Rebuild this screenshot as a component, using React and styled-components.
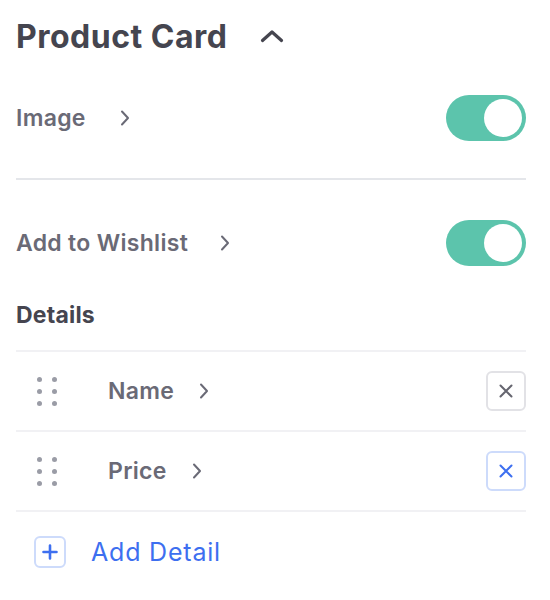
import styled, { createGlobalStyle } from 'styled-components';

const GlobalStyle = createGlobalStyle`
	body {
		margin: 0;
		background: #fff;
		font-family: Inter, 'Noto Sans', sans-serif;
	}
`;

const Panel = styled.section`
	width: 510px;
	padding: 0 24px 0 16px;
	display: flex;
	flex-direction: column;
`;

const Header = styled.header`
	height: 72px;
	display: flex;
	align-items: center;
	gap: 32px;
`;

const Title = styled.h2`
	margin: 0;
	font-size: 32px;
	font-weight: 700;
	letter-spacing: 0.5px;
	color: #45454f;
`;

const ToggleRow = styled.div`
	height: 46px;
	margin-top: ${(p) => p.$top}px;
	display: flex;
	align-items: center;
	justify-content: space-between;
`;

const LabelGroup = styled.div`
	display: flex;
	align-items: center;
	gap: ${(p) => p.$gap}px;
`;

const Label = styled.span`
	font-size: 23px;
	font-weight: 600;
	letter-spacing: 0.3px;
	color: #6a6a76;
`;

const Divider = styled.hr`
	margin: 37px 0 0;
	border: none;
	border-top: 2px solid #e4e6ea;
`;

const Toggle = styled.button`
	width: 80px;
	height: 46px;
	padding: 4px;
	border: none;
	border-radius: 23px;
	background: #5cc4ac;
	display: flex;
	justify-content: flex-end;
	align-items: center;
`;

const Knob = styled.span`
	width: 38px;
	height: 38px;
	border-radius: 50%;
	background: #fff;
`;

const SectionTitle = styled.h3`
	margin: 34px 0 0;
	height: 30px;
	line-height: 30px;
	font-size: 23px;
	font-weight: 700;
	letter-spacing: 0.2px;
	color: #45454f;
`;

const List = styled.div`
	margin-top: 20px;
	border-top: 2px solid #f1f1f4;
`;

const ItemRow = styled.div`
	height: 78px;
	border-bottom: 2px solid #f1f1f4;
	display: flex;
	align-items: center;
	padding-left: 21px;
`;

const Handle = styled.span`
	width: 56px;
	display: grid;
	grid-template-columns: repeat(2, 5px);
	gap: 7px 10px;
	& > i {
		width: 5px;
		height: 5px;
		border-radius: 50%;
		background: #9a9ca6;
	}
`;

const ItemName = styled(LabelGroup)`
	margin-left: 15px;
	flex: 1;
`;

const RemoveButton = styled.button`
	width: 40px;
	height: 40px;
	padding: 0;
	border-radius: 6px;
	border: 2px solid ${(p) => (p.$active ? '#cddbfb' : '#e2e2e6')};
	background: #fff;
	color: ${(p) => (p.$active ? '#3d6ff0' : '#65656f')};
	display: flex;
	align-items: center;
	justify-content: center;
`;

const AddRow = styled.button`
	height: 80px;
	padding: 0 0 0 18px;
	border: none;
	background: none;
	display: flex;
	align-items: center;
	gap: 25px;
	font-family: inherit;
	font-size: 25px;
	font-weight: 400;
	letter-spacing: 0.8px;
	color: #3d6ff0;
	cursor: pointer;
`;

const PlusBox = styled.span`
	width: 28px;
	height: 28px;
	border: 2px solid #cddbfb;
	border-radius: 6px;
	display: flex;
	align-items: center;
	justify-content: center;
`;

const ChevronRight = () => (
	<svg width="10" height="16" viewBox="0 0 10 16" fill="none">
		<polyline points="2,1.5 8,8 2,14.5" stroke="#6a6a76" strokeWidth="2" strokeLinecap="round" strokeLinejoin="round" />
	</svg>
);

const ChevronUp = () => (
	<svg width="24" height="14" viewBox="0 0 24 14" fill="none">
		<polyline points="2.5,11.5 12,3 21.5,11.5" stroke="#45454f" strokeWidth="3.2" strokeLinecap="round" strokeLinejoin="round" />
	</svg>
);

const Cross = () => (
	<svg width="14" height="14" viewBox="0 0 14 14" fill="none">
		<path d="M1.5 1.5 L12.5 12.5 M12.5 1.5 L1.5 12.5" stroke="currentColor" strokeWidth="2" strokeLinecap="round" />
	</svg>
);

const Plus = () => (
	<svg width="16" height="16" viewBox="0 0 16 16" fill="none">
		<path d="M8 1.5 V14.5 M1.5 8 H14.5" stroke="#3d6ff0" strokeWidth="2.6" strokeLinecap="round" />
	</svg>
);

const details = [
	{ name: 'Name', active: false },
	{ name: 'Price', active: true }
];

export default function App() {
	return (
		<>
			<GlobalStyle />
			<Panel>
				<Header>
					<Title>Product Card</Title>
					<ChevronUp />
				</Header>

				<ToggleRow $top={23}>
					<LabelGroup $gap={34}>
						<Label>Image</Label>
						<ChevronRight />
					</LabelGroup>
					<Toggle>
						<Knob />
					</Toggle>
				</ToggleRow>

				<Divider />

				<ToggleRow $top={40}>
					<LabelGroup $gap={32}>
						<Label>Add to Wishlist</Label>
						<ChevronRight />
					</LabelGroup>
					<Toggle>
						<Knob />
					</Toggle>
				</ToggleRow>

				<SectionTitle>Details</SectionTitle>

				<List>
					{details.map((d) => (
						<ItemRow key={d.name}>
							<Handle>
								{Array.from({ length: 6 }).map((_, i) => (
									<i key={i} />
								))}
							</Handle>
							<ItemName $gap={25}>
								<Label>{d.name}</Label>
								<ChevronRight />
							</ItemName>
							<RemoveButton $active={d.active}>
								<Cross />
							</RemoveButton>
						</ItemRow>
					))}
				</List>

				<AddRow>
					<PlusBox>
						<Plus />
					</PlusBox>
					Add Detail
				</AddRow>
			</Panel>
		</>
	);
}
